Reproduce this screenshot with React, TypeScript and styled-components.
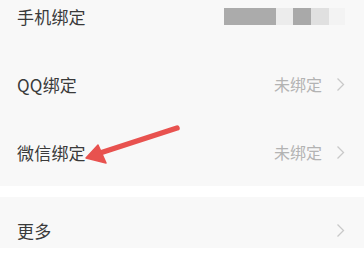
import React from 'react';
import styled, { createGlobalStyle } from 'styled-components';

const GlobalStyle = createGlobalStyle`
  html, body {
    margin: 0;
    padding: 0;
    background: #ffffff;
    overflow: hidden;
  }
  body {
    font-family: "Noto Sans CJK SC", "Noto Sans", sans-serif;
  }
`;

const Page = styled.div`
  position: relative;
  width: 364px;
  height: 263px;
  overflow: hidden;
  background: #ffffff;
`;

const Group = styled.div<{ $offset?: number }>`
  background: #f8f8f8;
  margin-top: ${(p) => p.$offset ?? 0}px;
`;

const Gap = styled.div`
  height: 11px;
  background: #ffffff;
`;

const Row = styled.div<{ $h: number; $pt?: number }>`
  height: ${(p) => p.$h}px;
  padding: ${(p) => p.$pt ?? 0}px 19px 0 17px;
  box-sizing: border-box;
  display: flex;
  align-items: center;
  justify-content: space-between;
`;

const Label = styled.span`
  font-size: 17px;
  color: #3a3a3a;
  letter-spacing: 0.2px;
`;

const Right = styled.div`
  display: flex;
  align-items: center;
  gap: 14px;
`;

const Value = styled.span`
  font-size: 16px;
  color: #b3b3b3;
`;

const Mosaic = styled.div`
  display: flex;
  height: 17px;
`;

const Tile = styled.div<{ $w: number; $c: string }>`
  width: ${(p) => p.$w}px;
  background: ${(p) => p.$c};
`;

const Overlay = styled.svg`
  position: absolute;
  left: 0;
  top: 0;
  pointer-events: none;
`;

const Chevron = () => (
  <svg width="9" height="15" viewBox="0 0 9 15">
    <path d="M1.5 1.5 L7.5 7.5 L1.5 13.5" fill="none" stroke="#c9c9c9" strokeWidth="1.3" />
  </svg>
);

const tiles = [
  { w: 52, c: '#ababab' },
  { w: 17, c: '#ececec' },
  { w: 18, c: '#a9a9a9' },
  { w: 18, c: '#e0e0e0' },
  { w: 16, c: '#f3f3f3' },
];

export default function App() {
  return (
    <Page>
      <GlobalStyle />
      <Group $offset={-18}>
        <Row $h={68}>
          <Label>手机绑定</Label>
          <Mosaic>
            {tiles.map((t, i) => (
              <Tile key={i} $w={t.w} $c={t.c} />
            ))}
          </Mosaic>
        </Row>
        <Row $h={68}>
          <Label>QQ绑定</Label>
          <Right>
            <Value>未绑定</Value>
            <Chevron />
          </Right>
        </Row>
        <Row $h={68}>
          <Label>微信绑定</Label>
          <Right>
            <Value>未绑定</Value>
            <Chevron />
          </Right>
        </Row>
      </Group>
      <Gap />
      <Group>
        <Row $h={51} $pt={16}>
          <Label>更多</Label>
          <Chevron />
        </Row>
      </Group>
      <Overlay width="364" height="263" viewBox="0 0 364 263">
        <line x1="177" y1="128" x2="100" y2="153" stroke="#e8524f" strokeWidth="5.5" strokeLinecap="round" />
        <polygon points="86,158 98,145 106,163" fill="#e8524f" stroke="#e8524f" strokeWidth="1.5" strokeLinejoin="round" />
      </Overlay>
    </Page>
  );
}
